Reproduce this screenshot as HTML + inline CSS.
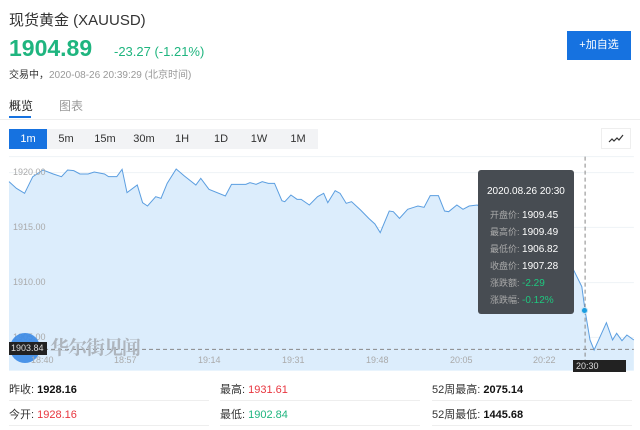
<!DOCTYPE html>
<html><head><meta charset="utf-8"><style>
*{margin:0;padding:0;box-sizing:border-box}
body{width:640px;height:429px;background:#fff;font-family:"Liberation Sans","Noto Sans CJK SC",sans-serif;position:relative;overflow:hidden;color:#333}
.a{position:absolute;white-space:nowrap}
.btn{position:absolute;top:129px;height:20px;font-size:11px;line-height:20px;text-align:center;color:#333}
.st{position:absolute;font-size:11px;color:#333}
.st b{color:#111}
.sep{position:absolute;height:1px;background:#eee}
</style></head><body>
<div class="a" style="left:9px;top:9px;font-size:15px;color:#333">现货黄金 (XAUUSD)</div>
<div class="a" style="left:9px;top:35px;font-size:23px;font-weight:bold;color:#1fb57f">1904.89</div>
<div class="a" style="left:114px;top:44px;font-size:13px;color:#1fb57f">-23.27 (-1.21%)</div>
<div class="a" style="left:9px;top:66px;font-size:10px;color:#333">交易中，<span style="color:#999">2020-08-26 20:39:29 (北京时间)</span></div>
<div class="a" style="left:567px;top:31px;width:64px;height:29px;background:#1672e0;color:#fff;font-size:11px;line-height:29px;text-align:center">+加自选</div>
<div class="a" style="left:9px;top:97px;font-size:12px;color:#222">概览</div>
<div class="a" style="left:59px;top:97px;font-size:12px;color:#999">图表</div>
<div class="a" style="left:0;top:119px;width:640px;height:1px;background:#eee"></div>
<div class="a" style="left:9px;top:116px;width:22px;height:2px;background:#1672e0"></div>
<div class="a" style="left:9px;top:129px;width:309px;height:20px;background:#f2f3f5"></div>
<div class="btn" style="left:9px;width:38px;background:#1672e0;color:#fff">1m</div>
<div class="btn" style="left:50px;width:32px">5m</div>
<div class="btn" style="left:89px;width:32px">15m</div>
<div class="btn" style="left:128px;width:32px">30m</div>
<div class="btn" style="left:166px;width:32px">1H</div>
<div class="btn" style="left:205px;width:32px">1D</div>
<div class="btn" style="left:243px;width:32px">1W</div>
<div class="btn" style="left:282px;width:32px">1M</div>
<div class="a" style="left:601px;top:128px;width:30px;height:21px;border:1px solid #eee;background:#fff">
<svg width="28" height="19"><polyline points="7,13 10,10 12,12 15,9 17,11 21,6" fill="none" stroke="#333" stroke-width="1.2"/></svg></div>
<svg class="a" style="left:0;top:150px" width="640" height="280" viewBox="0 0 1562 840" preserveAspectRatio="none">
<rect x="22" y="20" width="1525" height="642" fill="#fff"/>
<g stroke="#eef2f6" stroke-width="1">
<line x1="22" y1="20" x2="1547" y2="20" vector-effect="non-scaling-stroke"/>
<line x1="22" y1="68" x2="1547" y2="68" vector-effect="non-scaling-stroke"/>
<line x1="22" y1="232" x2="1547" y2="232" vector-effect="non-scaling-stroke"/>
<line x1="22" y1="398" x2="1547" y2="398" vector-effect="non-scaling-stroke"/>
<line x1="22" y1="562" x2="1547" y2="562" vector-effect="non-scaling-stroke"/>
</g>
<polygon fill="#dcedfc" points="22,95 40,115 60,130 80,80 105,60 130,72 150,80 165,60 180,62 195,72 215,72 230,66 255,72 265,80 285,80 298,58 310,128 335,105 348,158 360,168 380,140 393,145 408,100 430,57 450,78 478,105 490,85 510,118 550,138 565,103 600,103 610,98 625,103 640,95 655,100 670,100 688,152 695,155 710,135 725,148 735,148 755,165 775,140 790,130 800,158 818,122 830,130 845,160 858,155 880,180 900,205 915,222 928,248 950,183 960,185 975,205 995,178 1010,172 1020,168 1035,172 1050,137 1070,137 1085,183 1095,185 1115,165 1130,178 1145,168 1165,165 1200,200 1250,250 1300,280 1340,330 1360,350 1385,352 1400,360 1420,410 1428,482 1440,570 1450,600 1480,518 1495,570 1505,550 1518,572 1530,555 1547,570 1547,662 22,662"/>
<polyline fill="none" stroke="#5b9ee0" stroke-width="1" vector-effect="non-scaling-stroke" points="22,95 40,115 60,130 80,80 105,60 130,72 150,80 165,60 180,62 195,72 215,72 230,66 255,72 265,80 285,80 298,58 310,128 335,105 348,158 360,168 380,140 393,145 408,100 430,57 450,78 478,105 490,85 510,118 550,138 565,103 600,103 610,98 625,103 640,95 655,100 670,100 688,152 695,155 710,135 725,148 735,148 755,165 775,140 790,130 800,158 818,122 830,130 845,160 858,155 880,180 900,205 915,222 928,248 950,183 960,185 975,205 995,178 1010,172 1020,168 1035,172 1050,137 1070,137 1085,183 1095,185 1115,165 1130,178 1145,168 1165,165 1200,200 1250,250 1300,280 1340,330 1360,350 1385,352 1400,360 1420,410 1428,482 1440,570 1450,600 1480,518 1495,570 1505,550 1518,572 1530,555 1547,570"/>
<line x1="22" y1="598" x2="1547" y2="598" stroke="#888" stroke-dasharray="4 3" vector-effect="non-scaling-stroke"/>
<line x1="1428" y1="20" x2="1428" y2="662" stroke="#888" stroke-dasharray="4 3" vector-effect="non-scaling-stroke"/>
</svg>
<div class="a" style="left:13px;top:167px;font-size:9px;color:#aaa">1920.00</div>
<div class="a" style="left:13px;top:222px;font-size:9px;color:#aaa">1915.00</div>
<div class="a" style="left:13px;top:277px;font-size:9px;color:#aaa">1910.00</div>
<div class="a" style="left:13px;top:332px;font-size:9px;color:#aaa">1905.00</div>
<div class="a" style="left:10px;top:333px;width:30px;height:30px;border-radius:50%;background:#3b8ae6;opacity:.9"></div>
<div class="a" style="left:9px;top:342px;width:38px;height:13px;background:#222;color:#ddd;font-size:9px;line-height:13px;padding-left:2px">1903.84</div>
<div class="a" style="left:50px;top:333px;font-size:19px;color:#aeb5bd;font-family:'Noto Serif CJK SC',serif;font-weight:bold;letter-spacing:-1px">华尔街见闻</div>
<div class="a" style="left:31px;top:355px;font-size:9px;color:#aaa">18:40</div>
<div class="a" style="left:114px;top:355px;font-size:9px;color:#aaa">18:57</div>
<div class="a" style="left:198px;top:355px;font-size:9px;color:#aaa">19:14</div>
<div class="a" style="left:282px;top:355px;font-size:9px;color:#aaa">19:31</div>
<div class="a" style="left:366px;top:355px;font-size:9px;color:#aaa">19:48</div>
<div class="a" style="left:450px;top:355px;font-size:9px;color:#aaa">20:05</div>
<div class="a" style="left:533px;top:355px;font-size:9px;color:#aaa">20:22</div>
<div class="a" style="left:573px;top:360px;width:53px;height:12px;background:#222;color:#ddd;font-size:9px;line-height:12px;padding-left:3px">20:30</div>
<div class="a" style="left:581px;top:307px;width:7px;height:7px;border-radius:50%;background:#1a9de0;border:1px solid #bfe0f5"></div>
<div class="a" style="left:478px;top:170px;width:96px;height:144px;background:#474c52;border-radius:3px;color:#fff;font-size:10px">
<div class="a" style="left:9px;top:16px">2020.08.26 20:30</div>
<div class="a" style="left:12px;top:38px"><span style="color:#aaa;font-size:9px">开盘价: </span>1909.45</div>
<div class="a" style="left:12px;top:55px"><span style="color:#aaa;font-size:9px">最高价: </span>1909.49</div>
<div class="a" style="left:12px;top:72px"><span style="color:#aaa;font-size:9px">最低价: </span>1906.82</div>
<div class="a" style="left:12px;top:89px"><span style="color:#aaa;font-size:9px">收盘价: </span>1907.28</div>
<div class="a" style="left:12px;top:106px"><span style="color:#aaa;font-size:9px">涨跌额: </span><span style="color:#1fc77f">-2.29</span></div>
<div class="a" style="left:12px;top:123px"><span style="color:#aaa;font-size:9px">涨跌幅: </span><span style="color:#1fc77f">-0.12%</span></div>
</div>
<div class="st" style="left:9px;top:381px">昨收: <b>1928.16</b></div>
<div class="st" style="left:220px;top:381px">最高: <b style="color:#e8363f;font-weight:normal">1931.61</b></div>
<div class="st" style="left:432px;top:381px">52周最高: <b>2075.14</b></div>
<div class="st" style="left:9px;top:406px">今开: <b style="color:#e8363f;font-weight:normal">1928.16</b></div>
<div class="st" style="left:220px;top:406px">最低: <b style="color:#1fb57f;font-weight:normal">1902.84</b></div>
<div class="st" style="left:432px;top:406px">52周最低: <b>1445.68</b></div>
<div class="sep" style="left:9px;top:400px;width:200px"></div>
<div class="sep" style="left:220px;top:400px;width:200px"></div>
<div class="sep" style="left:432px;top:400px;width:200px"></div>
<div class="sep" style="left:9px;top:425px;width:200px"></div>
<div class="sep" style="left:220px;top:425px;width:200px"></div>
<div class="sep" style="left:432px;top:425px;width:200px"></div>
</body></html>
